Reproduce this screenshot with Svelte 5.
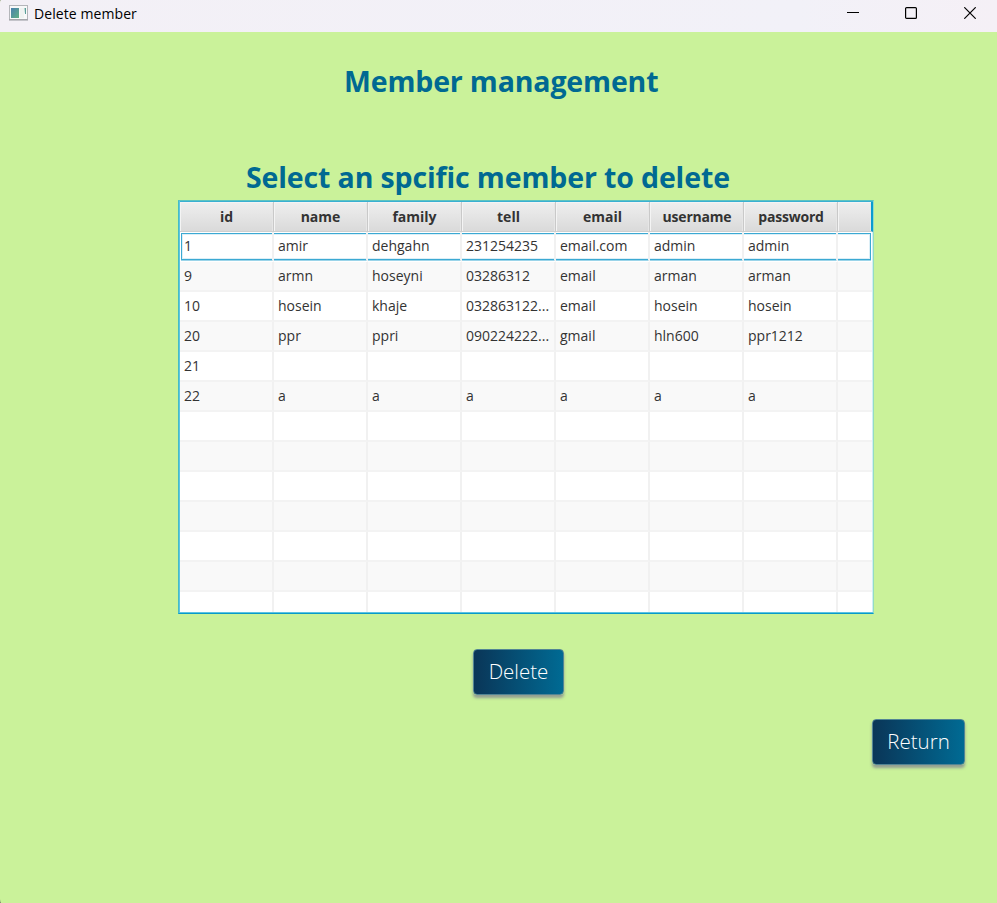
<script>
  const columns = ['id', 'name', 'family', 'tell', 'email', 'username', 'password'];
  const members = [
    ['1', 'amir', 'dehgahn', '231254235', 'email.com', 'admin', 'admin'],
    ['9', 'armn', 'hoseyni', '03286312', 'email', 'arman', 'arman'],
    ['10', 'hosein', 'khaje', '032863122...', 'email', 'hosein', 'hosein'],
    ['20', 'ppr', 'ppri', '090224222...', 'gmail', 'hln600', 'ppr1212'],
    ['21', '', '', '', '', '', ''],
    ['22', 'a', 'a', 'a', 'a', 'a', 'a']
  ];
  const blank = ['', '', '', '', '', '', ''];
  const rows = [...members, ...Array.from({ length: 7 }, () => blank)];
  let selected = $state(0);
</script>

<div class="window">
  <header class="titlebar">
    <svg class="appicon" width="19" height="16" viewBox="0 0 19 16">
      <defs>
        <linearGradient id="pane" x1="0" y1="0" x2="1" y2="1">
          <stop offset="0" stop-color="#4a80ae" />
          <stop offset="1" stop-color="#5fb084" />
        </linearGradient>
      </defs>
      <rect x="0.5" y="0.5" width="18" height="14" fill="#f8f9f9" stroke="#b4b6ba" />
      <path d="M0 15h19" stroke="#96989d" />
      <rect x="2" y="3" width="8" height="10" fill="url(#pane)" />
      <rect x="11" y="3" width="4" height="10" fill="#eff3f1" />
      <path d="M15.5 3h1.5v6h-1z" fill="#5b9f98" />
    </svg>
    <span class="caption">Delete member</span>
    <div class="controls">
      <svg width="12" height="12" viewBox="0 0 12 12"><path d="M0 5.5h12" stroke="#000" fill="none" /></svg>
      <svg width="12" height="12" viewBox="0 0 12 12"><rect x="0.6" y="0.6" width="10.8" height="10.8" rx="1" stroke="#000" stroke-width="1.2" fill="none" /></svg>
      <svg width="12" height="12" viewBox="0 0 12 12"><path d="M.3.3l11.4 11.4M11.7.3L.3 11.7" stroke="#000" stroke-width="1.2" fill="none" /></svg>
    </div>
  </header>

  <main>
    <h1>Member management</h1>
    <h2>Select an spcific member to delete</h2>
    <div class="table">
      <div class="row head">
        {#each columns as label}
          <div class="cell">{label}</div>
        {/each}
        <div class="cell filler"></div>
      </div>
      {#each rows as row, i}
        <div class="row body" class:odd={i % 2 === 1} class:selected={i === selected} role="presentation" onclick={() => (selected = i)}>
          {#each row as value}
            <div class="cell">{value}</div>
          {/each}
          <div class="cell filler"></div>
        </div>
      {/each}
    </div>
    <button class="delete">Delete</button>
    <button class="return">Return</button>
  </main>
</div>

<style>
  :global(body) {
    background: #444;
  }
  .window {
    width: 997px;
    height: 903px;
    display: flex;
    flex-direction: column;
    overflow: hidden;
    border-radius: 1px 0 0 1px / 3px 0 0 5px;
    font-family: 'Open Sans', 'Noto Sans', sans-serif;
    background: #caf29a;
  }
  .titlebar {
    height: 32px;
    flex: none;
    display: flex;
    align-items: flex-start;
    box-sizing: border-box;
    padding: 5px 21px 0 9px;
    background: linear-gradient(90deg, #f3f0f6, #f2f1f8 80%, #f5f0f6);
  }
  .appicon {
    flex: none;
  }
  .caption {
    margin-left: 6px;
    font-size: 14px;
    line-height: 18px;
    letter-spacing: 0.08px;
    color: #000;
    white-space: nowrap;
  }
  .controls {
    display: flex;
    gap: 47px;
    margin-left: auto;
    padding-top: 2px;
  }
  .controls svg:first-child {
    margin-right: -1px;
  }
  main {
    flex: 1;
    display: flex;
    flex-direction: column;
    align-items: flex-start;
  }
  h1,
  h2 {
    margin: 0;
    font-size: 28.5px;
    line-height: 40px;
    font-weight: 700;
    letter-spacing: -0.15px;
    color: #006992;
    white-space: nowrap;
  }
  h1 {
    margin: 29px 0 0 344px;
  }
  h2 {
    margin: 56px 0 0 246px;
    letter-spacing: -0.13px;
  }
  .table {
    position: relative;
    box-sizing: border-box;
    width: 696px;
    height: 414px;
    margin: 3px 0 0 178px;
    padding: 2px;
    overflow: hidden;
    background: #fff;
  }
  .table::after {
    content: '';
    position: absolute;
    inset: 0;
    border: 1px solid;
    border-color: #5cc4c0 #95dcc0 #089acb #45bcc6;
    box-shadow: inset 1px 0 #5fc3e0, inset 0 1px #39b0d2, inset 0 -1px #5cc3e2, inset -1px 0 #cfeef6;
    pointer-events: none;
  }
  .row {
    position: relative;
    display: flex;
    height: 30px;
  }
  .cell {
    position: relative;
    box-sizing: border-box;
    width: 94px;
    flex: none;
    border-right: 2px solid #f1f1f1;
    border-bottom: 2px solid #f3f3f3;
    padding-left: 4px;
    font-size: 14px;
    line-height: 27px;
    color: #333;
    white-space: nowrap;
    overflow: hidden;
  }
  .filler {
    width: 34px;
    border-right: none;
  }
  .head {
    z-index: 2;
    background: linear-gradient(#efefef, #d9d9d9);
  }
  .head .cell {
    padding: 0;
    text-align: center;
    font-weight: 700;
    line-height: 30px;
    border-right: 1px solid #c9c9c9;
    border-bottom: 1px solid #cfcfcf;
    box-shadow: inset 1px 1px #f4f4f4, inset -1px 0 #e6e6e6;
  }
  .head .cell:nth-child(n + 6) {
    padding-left: 1px;
    letter-spacing: -0.2px;
  }
  .head .filler {
    width: 35px;
    border-right: 2px solid #0a9bd0;
  }
  .odd {
    background: #f9f9f9;
  }
  .selected::before {
    content: '';
    position: absolute;
    inset: 1px 1px 2px 1px;
    border: 1px solid #3ba9d3;
    box-shadow: inset 0 0 0 1px #dceff7, 0 1px #9bd4e9;
  }
  .selected .cell {
    border-bottom-color: transparent;
  }
  button {
    box-sizing: border-box;
    height: 46px;
    padding: 0 0 2px;
    border: 1px solid #528594;
    border-radius: 4px;
    background: linear-gradient(90deg, #0a3557, #006b94);
    background-origin: border-box;
    box-shadow: 0 3px 3px rgba(100, 90, 140, 0.55);
    color: #fff;
    font-family: 'Open Sans', 'Noto Sans', sans-serif;
    font-weight: 300;
    font-size: 20.5px;
    line-height: 42px;
  }
  .delete {
    width: 91px;
    margin: 35px 0 0 473px;
  }
  .return {
    width: 93px;
    margin: 24px 0 0 872px;
  }
</style>
